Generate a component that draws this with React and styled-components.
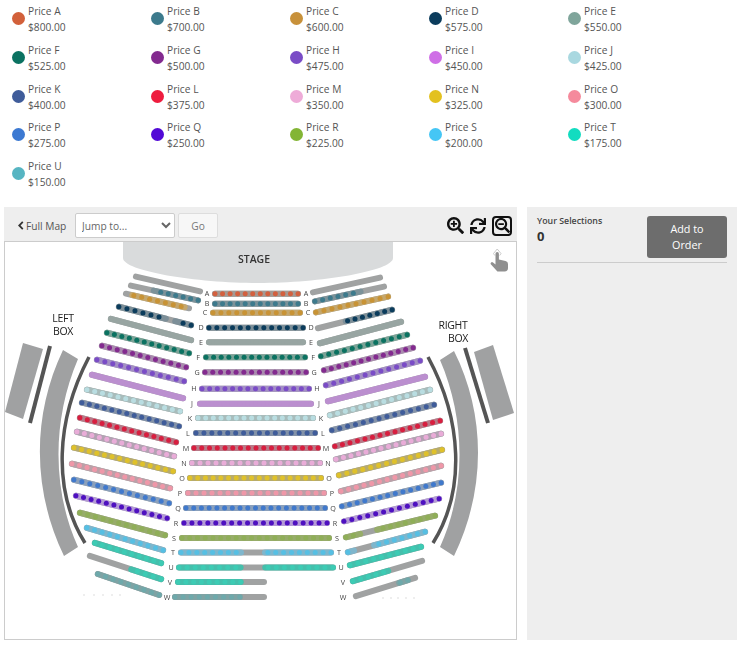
import React from 'react';
import styled, { createGlobalStyle } from 'styled-components';
import { FaSearchPlus, FaSearchMinus, FaSync } from 'react-icons/fa';

const GlobalStyle = createGlobalStyle`
  body {
    margin: 0;
    background: #fff;
    font-family: "Open Sans", "Liberation Sans", sans-serif;
    color: #555;
  }
`;

const PRICES = [
  ['A', '$800.00', '#d2603a'], ['B', '$700.00', '#3c7a8c'], ['C', '$600.00', '#c8913a'],
  ['D', '$575.00', '#0b3c5c'], ['E', '$550.00', '#7fa59b'], ['F', '$525.00', '#0b7261'],
  ['G', '$500.00', '#832a8f'], ['H', '$475.00', '#7a4cc6'], ['I', '$450.00', '#cf6fe6'],
  ['J', '$425.00', '#a9d8e0'], ['K', '$400.00', '#3f5c9a'], ['L', '$375.00', '#ee1c3e'],
  ['M', '$350.00', '#eeabd8'], ['N', '$325.00', '#e3c11f'], ['O', '$300.00', '#f58a9c'],
  ['P', '$275.00', '#3c79d2'], ['Q', '$250.00', '#5209d6'], ['R', '$225.00', '#83b535'],
  ['S', '$200.00', '#45c6f5'], ['T', '$175.00', '#12dcc0'], ['U', '$150.00', '#57b5c2'],
];

// base = rail colour, dot = seat colour
const ROW_COLORS = {
  A: { base: '#a39a94', dot: '#d2603f' },
  B: { base: '#7c9299', dot: '#3d7a8c' },
  C: { base: '#c4a76e', dot: '#c89335' },
  D: { base: '#7d8f98', dot: '#0b3c5c' },
  E: { base: '#98a5a2', dot: '#98a5a2' },
  F: { base: '#7ba397', dot: '#0b7261' },
  G: { base: '#a98bae', dot: '#832a8f' },
  H: { base: '#a38fc4', dot: '#7a4cc6' },
  J: { base: '#bb8fcf', dot: '#bb8fcf' },
  K: { base: '#a8bcbb', dot: '#b9dde1' },
  L: { base: '#8392a8', dot: '#3f5c9a' },
  M: { base: '#b77a88', dot: '#d81e3f' },
  N: { base: '#b3a2b3', dot: '#e9acd8' },
  O: { base: '#b7ab6d', dot: '#dfc12a' },
  P: { base: '#bba0a8', dot: '#ef97a8' },
  Q: { base: '#8ba0bb', dot: '#4079cc' },
  R: { base: '#b49ad6', dot: '#4e10c0' },
  S: { base: '#97ac6a', dot: '#8fae58' },
  T: { base: '#7fb6cc', dot: '#56bfe3' },
  U: { base: '#45bfac', dot: '#3dcbb4' },
  V: { base: '#45bfac', dot: '#3dcbb4' },
  W: { base: '#7fa3a4', dot: '#6ea9ab' },
};

// [row, x1, x2, y, coloured parts, right label x]
const CENTER_ROWS = [
  ['A', 212, 301, 293.7], ['B', 212, 301, 303.7], ['C', 210, 303, 312.7],
  ['D', 206, 306, 327.7], ['E', 206, 306, 342.3], ['F', 203, 308, 357.3],
  ['G', 202, 309, 372.3], ['H', 199, 312, 388.7], ['J', 197, 314, 403.7],
  ['K', 195, 316, 418], ['L', 193, 318, 433], ['M', 191, 321, 448],
  ['N', 189, 323, 463], ['O', 187, 324, 478], ['P', 185, 327, 493],
  ['Q', 183, 328, 508], ['R', 181, 330, 523], ['S', 179, 332, 538],
  ['T', 178, 334, 552.5, [[0, 0.4], [0.56, 1]]],
  ['U', 176, 336, 567.5, [[0, 0.4], [0.56, 1]]],
  ['V', 175, 267, 582, [[0, 0.73]], 343],
  ['W', 172, 267, 597, [[0, 0.73]], 343],
];

// [row, x1, y1, x2, y2, coloured parts]
const LEFT_ROWS = [
  ['A', 133, 276, 203, 292, []],
  ['B', 128, 285, 201, 301, [[0.34, 1]]],
  ['C', 123, 293, 192, 309, [[0.1, 0.93]]],
  ['D', 116, 306, 194, 326, [[0, 0.65], [0.78, 1]]],
  ['E', 108, 318, 194, 341],
  ['F', 104, 332, 192, 354],
  ['G', 99, 345, 189, 368],
  ['H', 94, 359, 187, 382],
  ['J', 89, 374, 186, 399],
  ['K', 84, 389, 183, 412],
  ['L', 79, 402, 182, 427],
  ['M', 77, 417, 179, 443],
  ['N', 74, 431, 177, 457],
  ['O', 71, 447, 176, 472],
  ['P', 69, 463, 173, 489],
  ['Q', 71, 479, 172, 504],
  ['R', 73, 495, 170, 519],
  ['S', 77, 512, 168, 536],
  ['T', 84, 527, 166, 551],
  ['U', 92, 542, 164, 564],
  ['V', 87, 555, 164, 580, [[0.58, 1]]],
  ['W', 95, 573, 162, 596],
];

const RIGHT_ROWS = [
  ['A', 310, 293, 383, 277, []],
  ['B', 312, 302, 387, 286, [[0, 0.66]]],
  ['C', 313, 313, 391, 296],
  ['D', 315, 329, 395, 309, [[0.375, 1]]],
  ['E', 317, 344, 404, 321],
  ['F', 318, 357, 410, 334],
  ['G', 321, 371, 416, 347],
  ['H', 323, 386, 423, 360],
  ['J', 325, 402, 428, 376],
  ['K', 327, 416, 433, 389],
  ['L', 329, 431, 437, 404],
  ['M', 332, 447, 443, 420],
  ['N', 333, 460, 444, 433],
  ['O', 336, 476, 445, 449],
  ['P', 338, 492, 444, 465],
  ['Q', 339, 507, 444, 482],
  ['R', 341, 522, 442, 498],
  ['S', 343, 538, 438, 515, [[0, 0.16], [0.35, 1]]],
  ['T', 345, 553, 428, 531, [[0, 0.08], [0.34, 1]]],
  ['U', 347, 566, 424, 546],
  ['V', 350, 582, 425, 560, [[0, 0.51]]],
  ['W', 353, 597, 418, 577, [[0.73, 0.88]]],
];

const RAIL_GREY = '#a0a2a2';
const SEAT_PITCH = 7.9;
const CAP = 3;

// the table holds the outer ends of each row, the round caps sit inside them
const SeatRow = ({ row, x1, y1, x2, y2, parts = [[0, 1]] }) => {
  const { base, dot } = ROW_COLORS[row];
  const fullLength = Math.hypot(x2 - x1, y2 - y1);
  const ux = (x2 - x1) / fullLength;
  const uy = (y2 - y1) / fullLength;
  const sx = x1 + ux * CAP;
  const sy = y1 + uy * CAP;
  const ex = x2 - ux * CAP;
  const ey = y2 - uy * CAP;
  const length = fullLength - CAP * 2;
  const count = Math.round(length / SEAT_PITCH) + 1;
  const at = (t) => [sx + (ex - sx) * t, sy + (ey - sy) * t];
  const seats = [];
  for (let i = 0; i < count; i++) {
    const t = i / (count - 1);
    if (parts.some(([a, b]) => t >= a && t <= b)) seats.push(at(t));
  }
  return (
    <g>
      <Rail x1={sx} y1={sy} x2={ex} y2={ey} stroke={RAIL_GREY} />
      {parts.map(([a, b]) => {
        const [ax, ay] = at(a);
        const [bx, by] = at(b);
        return <Rail key={a} x1={ax} y1={ay} x2={bx} y2={by} stroke={base} />;
      })}
      {seats.map(([cx, cy]) => (
        <circle key={cx} cx={cx} cy={cy} r="2.5" fill={dot} />
      ))}
    </g>
  );
};

const SeatMap = () => (
  <MapSvg viewBox="5 242 511 397">
    <path d="M123 241 H393 V258 C393 271 320 283 258 283 C196 283 123 271 123 258 Z" fill="#d9dbdc" />
    <StageLabel x="254" y="263">STAGE</StageLabel>

    <BoxLabel x="63" y="322">LEFT</BoxLabel>
    <BoxLabel x="63" y="335">BOX</BoxLabel>
    <BoxLabel x="453" y="329">RIGHT</BoxLabel>
    <BoxLabel x="458" y="342">BOX</BoxLabel>

    <polygon points="23,343 43,349 23,419 5,412" fill="#a0a1a2" />
    <line x1="50" y1="346" x2="30" y2="423" stroke="#555" strokeWidth="4" />
    <path d="M63 350 L78 359 C52 420 52 490 78 547 L64 556 C32 490 32 415 63 350 Z" fill="#a0a1a2" />
    <path d="M89 357 C56 420 52 490 85 543" fill="none" stroke="#555" strokeWidth="3.5" />

    <polygon points="474,352 493,345 514,413 493,420" fill="#a0a1a2" />
    <line x1="465" y1="348" x2="488" y2="423" stroke="#555" strokeWidth="4" />
    <path d="M454 351 L440 360 C466 420 466 490 440 547 L454 556 C486 490 486 415 454 351 Z" fill="#a0a1a2" />
    <path d="M428 357 C462 420 466 490 433 543" fill="none" stroke="#555" strokeWidth="3.5" />

    {CENTER_ROWS.map(([row, x1, x2, y, parts, rightX]) => (
      <g key={row}>
        <SeatRow row={row} x1={x1} y1={y} x2={x2} y2={y} parts={parts} />
        <RowLetter x={x1 - 5} y={y + 2.5}>{row}</RowLetter>
        <RowLetter x={rightX || x2 + 5} y={y + 2.5}>{row}</RowLetter>
      </g>
    ))}
    {LEFT_ROWS.map(([row, x1, y1, x2, y2, parts]) => (
      <SeatRow key={row} row={row} x1={x1} y1={y1} x2={x2} y2={y2} parts={parts} />
    ))}
    {RIGHT_ROWS.map(([row, x1, y1, x2, y2, parts]) => (
      <SeatRow key={row} row={row} x1={x1} y1={y1} x2={x2} y2={y2} parts={parts} />
    ))}

    {[84, 94, 103, 112, 120].map((cx) => (
      <circle key={cx} cx={cx} cy="595" r="0.8" fill="#d8d8d8" />
    ))}
    {[383, 391, 398, 406, 414].map((cx) => (
      <circle key={cx} cx={cx} cy="598" r="0.8" fill="#d8d8d8" />
    ))}
  </MapSvg>
);

const TouchHint = () => (
  <HintSvg viewBox="0 0 20 24">
    <path d="M3.5 5.5 L7.2 1 L11 5.5 M4.8 7.5 L3.5 5.5 M9.7 7.5 L11 5.5" fill="none" stroke="#c4c4c4" strokeWidth="0.9" />
    <path
      d="M5.5 5.8 a1.7 1.7 0 0 1 3.4 0 V11.5 l6.6 1.5 a3 3 0 0 1 2.5 3 V20 a3.4 3.4 0 0 1 -3.4 3.4 H7.4 L1 16.4 a1.3 1.3 0 0 1 2 -1.8 L5.5 16.6 Z"
      fill="#8f8f8f"
    />
  </HintSvg>
);

const App = () => (
  <>
    <GlobalStyle />
    <Legend>
      {PRICES.map(([name, amount, color]) => (
        <LegendItem key={name}>
          <Swatch $color={color} />
          <div>
            <div>Price {name}</div>
            <div>{amount}</div>
          </div>
        </LegendItem>
      ))}
    </Legend>
    <Main>
      <MapColumn>
        <Toolbar>
          <BackLink><Chevron viewBox="0 0 6 10"><path d="M5 1 L1 5 L5 9" /></Chevron>Full Map</BackLink>
          <JumpSelect defaultValue="">
            <option value="">Jump to...</option>
          </JumpSelect>
          <GoButton type="button">Go</GoButton>
          <Tools>
            <FaSearchPlus size={17} />
            <FaSync size={16} />
            <ActiveTool><FaSearchMinus size={15} /></ActiveTool>
          </Tools>
        </Toolbar>
        <MapFrame>
          <SeatMap />
          <TouchHint />
        </MapFrame>
      </MapColumn>
      <Sidebar>
        <SelectionHeader>
          <div>
            <SelectionLabel>Your Selections</SelectionLabel>
            <SelectionCount>0</SelectionCount>
          </div>
          <AddButton type="button">Add to Order</AddButton>
        </SelectionHeader>
      </Sidebar>
    </Main>
  </>
);

export default App;

const Legend = styled.section`
  display: grid;
  grid-template-columns: repeat(5, 139px);
  grid-auto-rows: 38.75px;
  padding: 3px 0 0 12px;
  height: 207px;
  box-sizing: border-box;
`;

const LegendItem = styled.div`
  display: flex;
  align-items: flex-start;
  gap: 3px;
  font-size: 10.2px;
  line-height: 16px;
`;

const Swatch = styled.span`
  flex: none;
  width: 13px;
  height: 13px;
  margin-top: 9px;
  border-radius: 50%;
  background: ${(p) => p.$color};
`;

const Main = styled.main`
  display: flex;
  gap: 10px;
  padding-left: 4px;
`;

const MapColumn = styled.div`
  width: 513px;
`;

const Toolbar = styled.div`
  display: flex;
  align-items: center;
  height: 34px;
  padding: 3px 5px 0 14px;
  box-sizing: border-box;
  background: #eee;
`;

const BackLink = styled.span`
  display: flex;
  align-items: center;
  gap: 2px;
  width: 57px;
  font-size: 10.2px;
  color: #555;
`;

const Chevron = styled.svg`
  width: 6px;
  height: 9px;
  fill: none;
  stroke: #333;
  stroke-width: 2;
`;

const JumpSelect = styled.select`
  width: 100px;
  height: 25px;
  padding: 0 2px;
  border: 1px solid #ccc;
  border-radius: 2px;
  background: #fff;
  font: 10.2px "Open Sans", sans-serif;
  color: #666;
`;

const GoButton = styled.button`
  width: 40px;
  height: 25px;
  margin-left: 3px;
  border: 1px solid #ddd;
  border-radius: 2px;
  background: #f7f7f7;
  font: 10.2px "Open Sans", sans-serif;
  color: #777;
`;

const Tools = styled.div`
  display: flex;
  align-items: center;
  gap: 6px;
  margin-left: auto;
  color: #111;
`;

const ActiveTool = styled.span`
  display: flex;
  align-items: center;
  justify-content: center;
  width: 16px;
  height: 16px;
  border: 2px solid #111;
  border-radius: 4px;
`;

const MapFrame = styled.div`
  position: relative;
  height: 399px;
  border: 1px solid #ccc;
  box-sizing: border-box;
  background: #fff;
`;

const MapSvg = styled.svg`
  display: block;
  width: 511px;
  height: 397px;
  filter: blur(0.35px);
`;

const Rail = styled.line`
  stroke-width: 6;
  stroke-linecap: round;
`;

const StageLabel = styled.text`
  font: 600 10.5px "Open Sans", sans-serif;
  fill: #333;
  text-anchor: middle;
`;

const BoxLabel = styled.text`
  font: 10.5px "Open Sans", sans-serif;
  fill: #222;
  text-anchor: middle;
  letter-spacing: -0.3px;
`;

const RowLetter = styled.text`
  font: 7.2px "Open Sans", sans-serif;
  fill: #444;
  text-anchor: middle;
`;

const HintSvg = styled.svg`
  position: absolute;
  top: 6px;
  right: 6px;
  width: 20px;
  height: 24px;
`;

const Sidebar = styled.aside`
  width: 210px;
  height: 433px;
  padding: 0 10px;
  box-sizing: border-box;
  background: #eee;
`;

const SelectionHeader = styled.div`
  display: flex;
  justify-content: space-between;
  align-items: flex-start;
  height: 56px;
  padding-top: 9px;
  box-sizing: border-box;
  border-bottom: 1px solid #ccc;
`;

const SelectionLabel = styled.div`
  margin-top: -1px;
  font-size: 8.8px;
  font-weight: 600;
  line-height: 12px;
  color: #444;
`;

const SelectionCount = styled.div`
  font-size: 13px;
  font-weight: 700;
  line-height: 18px;
  color: #333;
`;

const AddButton = styled.button`
  width: 80px;
  height: 42px;
  padding: 0 14px;
  border: none;
  border-radius: 3px;
  background: #6d6d6d;
  font: 10.8px/16px "Open Sans", sans-serif;
  color: #fff;
`;
